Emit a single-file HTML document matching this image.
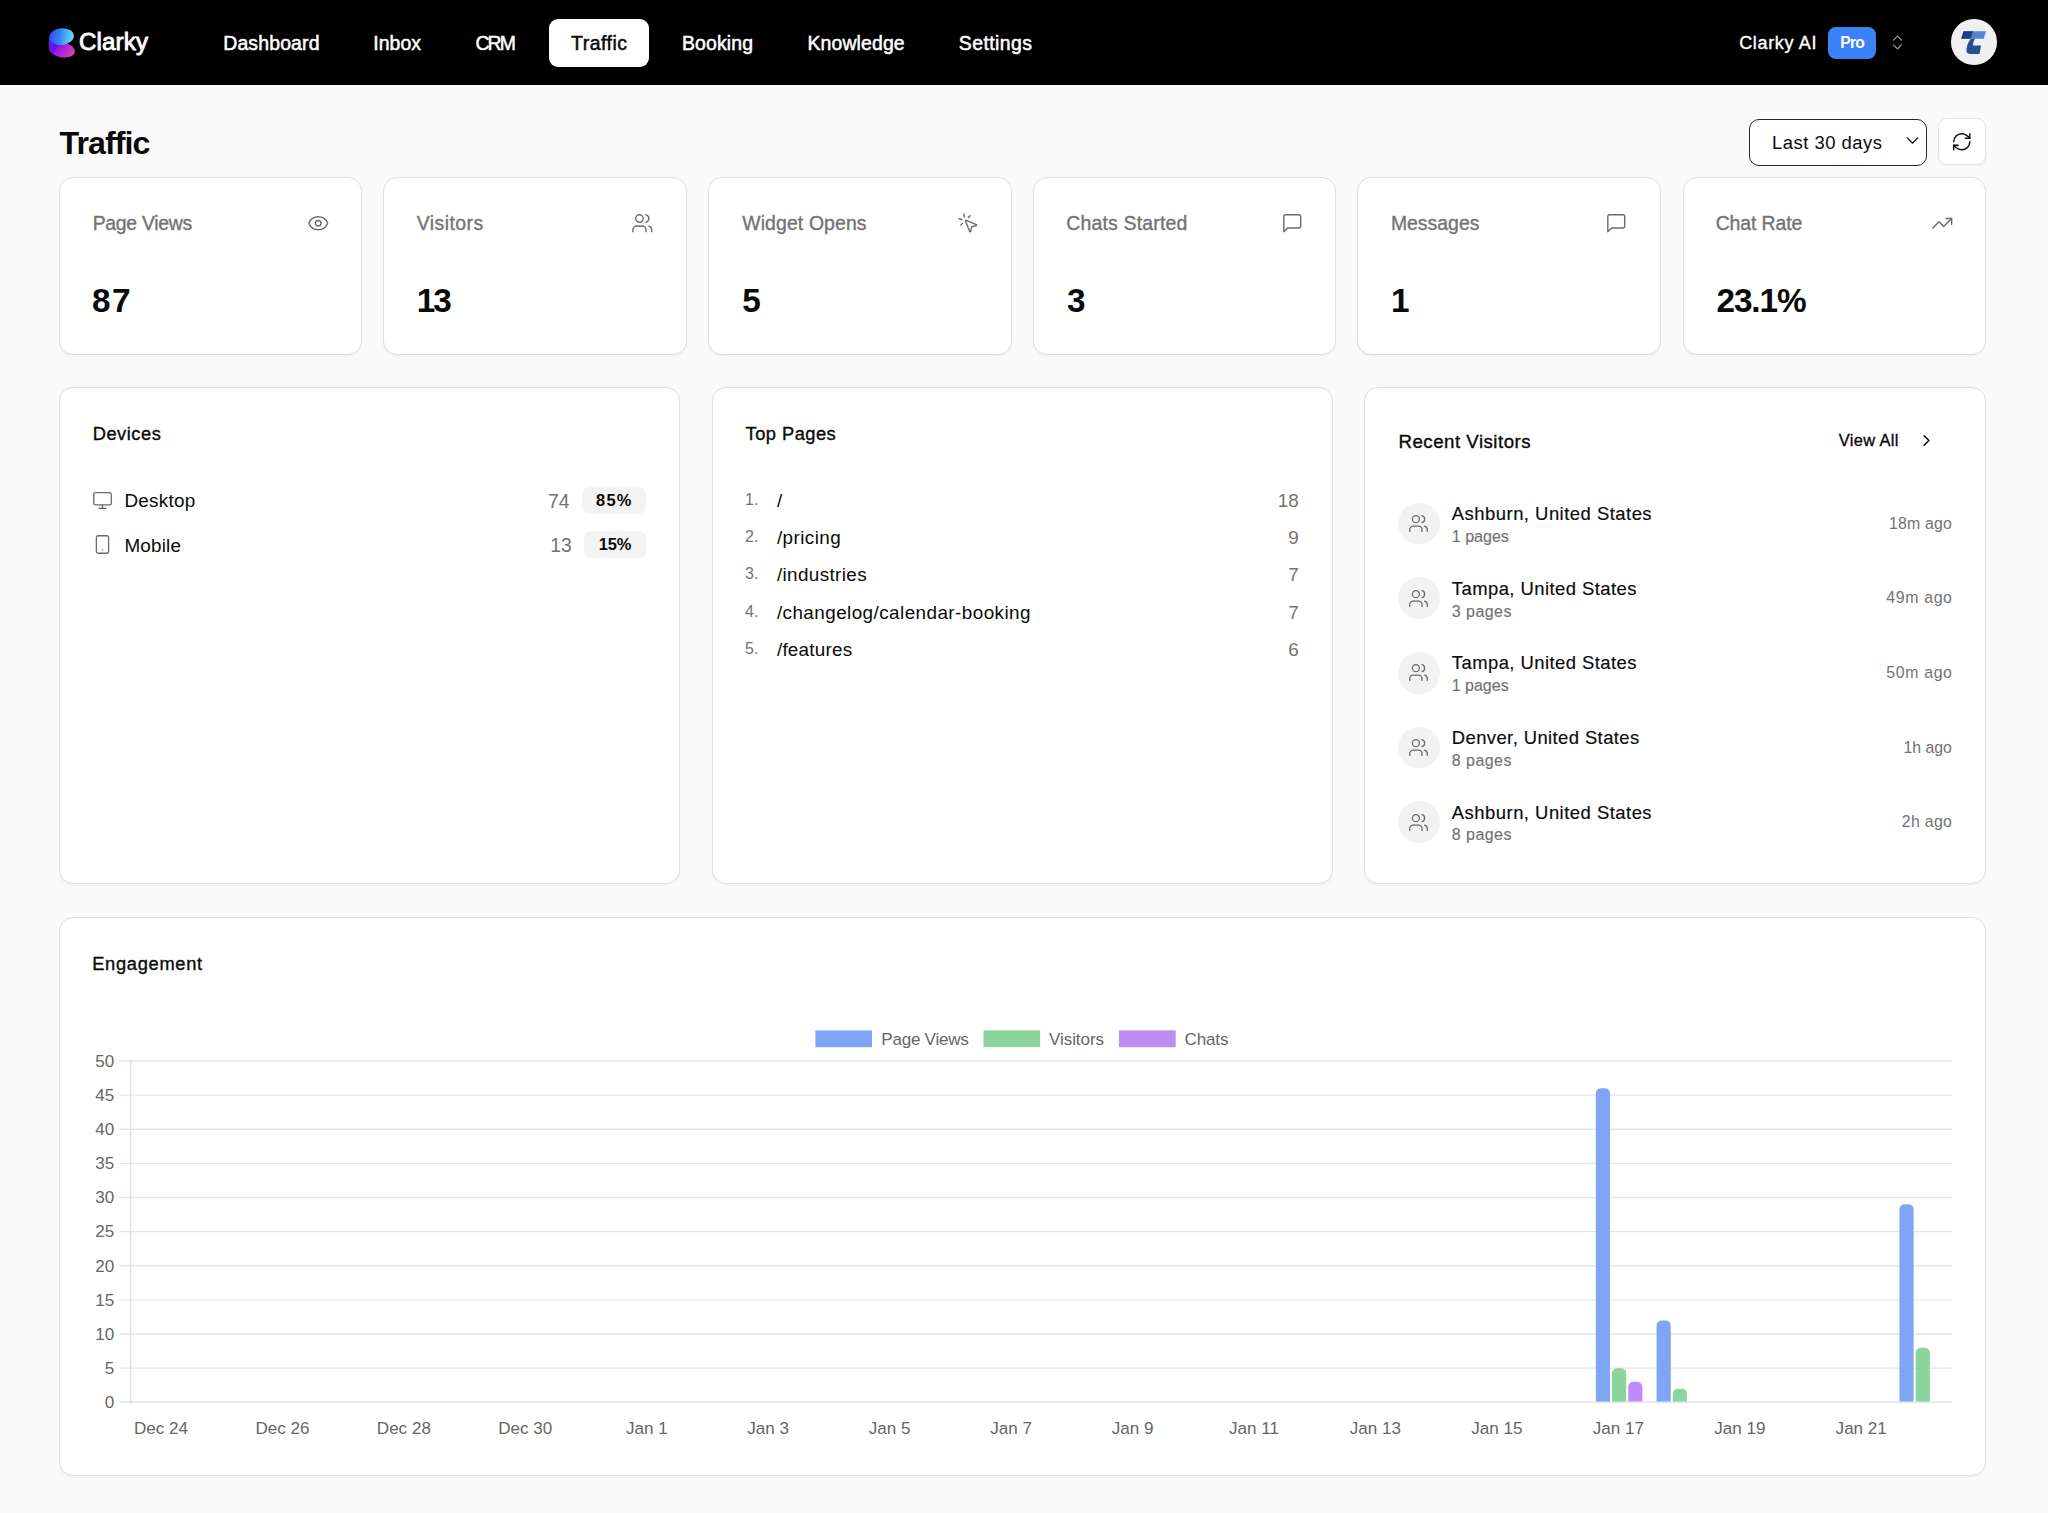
<!DOCTYPE html>
<html><head><meta charset="utf-8"><title>Traffic</title>
<style>
html,body{margin:0;padding:0;}
body{width:2048px;height:1513px;overflow:hidden;position:relative;background:#fafafa;font-family:"Liberation Sans",sans-serif;}
.t{position:absolute;white-space:nowrap;line-height:1;}
.bx{position:absolute;}
.ic{position:absolute;overflow:visible;}
</style></head><body>
<div class="bx" style="left:0.00px;top:0.00px;width:2048.00px;height:85.00px;background:#000;"></div>
<svg class="ic" style="left:44px;top:24px;width:36px;height:38px" viewBox="0 0 36 38">
<defs>
<linearGradient id="lg1" x1="0" y1="0" x2="1" y2="0.2"><stop offset="0" stop-color="#3a3cf2"/><stop offset="0.45" stop-color="#2f7cf6"/><stop offset="1" stop-color="#62d6fa"/></linearGradient>
<linearGradient id="lg2" x1="0" y1="0" x2="1" y2="0.3"><stop offset="0" stop-color="#6a12e6"/><stop offset="0.5" stop-color="#9a1de6"/><stop offset="1" stop-color="#d43fb4"/></linearGradient>
<filter id="bl" x="-20%" y="-20%" width="140%" height="140%"><feGaussianBlur stdDeviation="0.45"/></filter>
</defs>
<g filter="url(#bl)">
<ellipse cx="17.8" cy="25.6" rx="13.2" ry="7.6" transform="rotate(12 17.8 25.6)" fill="url(#lg2)"/>
<path d="M5.5 13 C3.8 19 4.3 25 8.5 29.5 L15 22 Z" fill="#6414e6"/>
<ellipse cx="17.6" cy="12.6" rx="12.3" ry="8.4" transform="rotate(-6 17.6 12.6)" fill="url(#lg1)"/>
</g></svg>
<div class="t" style="left:79.00px;top:30.00px;font-size:24.11px;color:#fff;letter-spacing:0.138px;-webkit-text-stroke:0.9px #fff;">Clarky</div>
<div class="bx" style="left:549.00px;top:19.00px;width:100.00px;height:47.60px;background:#fff;border-radius:9px;"></div>
<div class="t" style="left:223.20px;top:34.00px;font-size:19.43px;color:#fff;letter-spacing:0.163px;-webkit-text-stroke:0.5px #fff;">Dashboard</div>
<div class="t" style="left:373.30px;top:34.00px;font-size:19.43px;color:#fff;letter-spacing:0.038px;-webkit-text-stroke:0.5px #fff;">Inbox</div>
<div class="t" style="left:475.40px;top:34.00px;font-size:19.43px;color:#fff;letter-spacing:-1.833px;-webkit-text-stroke:0.5px #fff;">CRM</div>
<div class="t" style="left:571.00px;top:34.00px;font-size:19.43px;color:#0a0a0a;letter-spacing:0.513px;-webkit-text-stroke:0.5px #0a0a0a;">Traffic</div>
<div class="t" style="left:681.90px;top:34.00px;font-size:19.43px;color:#fff;letter-spacing:0.175px;-webkit-text-stroke:0.5px #fff;">Booking</div>
<div class="t" style="left:807.50px;top:34.00px;font-size:19.43px;color:#fff;letter-spacing:0.127px;-webkit-text-stroke:0.5px #fff;">Knowledge</div>
<div class="t" style="left:958.80px;top:34.00px;font-size:19.43px;color:#fff;letter-spacing:0.424px;-webkit-text-stroke:0.5px #fff;">Settings</div>
<div class="t" style="left:1739.20px;top:34.00px;font-size:18.01px;color:#fff;letter-spacing:0.665px;-webkit-text-stroke:0.35px #fff;">Clarky AI</div>
<div class="bx" style="left:1828.40px;top:26.90px;width:47.90px;height:31.80px;background:#3b82f6;border-radius:8px;"></div>
<div class="t" style="left:1840.30px;top:35.00px;font-size:15.60px;color:#fff;font-weight:700;letter-spacing:-0.708px;">Pro</div>
<svg class="ic" style="left:1888.00px;top:33.20px;width:19px;height:19px" viewBox="0 0 24 24" fill="none" stroke="#9a9a9a" stroke-width="1.6" stroke-linecap="round" stroke-linejoin="round"><path d="m7 15 5 5 5-5"/><path d="m7 9 5-5 5 5"/></svg>
<div class="bx" style="left:1951.2px;top:19.4px;width:45.4px;height:45.4px;border-radius:50%;background:#f0f0f0;"></div>
<svg class="ic" style="left:1958px;top:28px;width:32px;height:30px" viewBox="0 0 32 30">
<path d="M5.5 3.2 L28 3.2 L25.7 10.8 L3.2 10.8 Z" fill="#4f86cf"/>
<path d="M5.5 3.2 L15 3.2 L12.5 10.8 L3.2 10.8 Z" fill="#1e3f7d"/>
<path d="M13 10.8 L17 10.8 C15.5 13 15 15.5 15 17.5 L23 17.5 L21.5 26 L12.5 26 C9 26 8 23.5 8.6 20.5 C9.3 16.5 10.5 13 13 10.8Z" fill="#284f8f"/>
</svg>
<div class="t" style="left:59.50px;top:127.00px;font-size:32.20px;color:#0a0a0a;font-weight:700;letter-spacing:-0.957px;">Traffic</div>
<div class="bx" style="left:1749.00px;top:119.00px;width:178.00px;height:46.50px;background:#fff;border:1px solid #262626;border-radius:10px;box-sizing:border-box;"></div>
<div class="t" style="left:1772.00px;top:134.00px;font-size:18.44px;color:#0a0a0a;letter-spacing:0.496px;">Last 30 days</div>
<svg class="ic" style="left:1902.30px;top:129.50px;width:21px;height:21px" viewBox="0 0 24 24" fill="none" stroke="#0a0a0a" stroke-width="1.6" stroke-linecap="round" stroke-linejoin="round"><path d="m6 9 6 6 6-6"/></svg>
<div class="bx" style="left:1938.10px;top:118.10px;width:47.60px;height:47.40px;background:#fff;border:1px solid #e5e5e5;border-radius:9px;box-sizing:border-box;box-shadow:0 1px 2px rgba(0,0,0,0.05);"></div>
<svg class="ic" style="left:1951.25px;top:131.35px;width:21.5px;height:21.5px" viewBox="0 0 24 24" fill="none" stroke="#0a0a0a" stroke-width="1.6" stroke-linecap="round" stroke-linejoin="round"><path d="M3 12a9 9 0 0 1 9-9 9.75 9.75 0 0 1 6.74 2.74L21 8"/><path d="M21 3v5h-5"/><path d="M21 12a9 9 0 0 1-9 9 9.75 9.75 0 0 1-6.74-2.74L3 16"/><path d="M8 16H3v5"/></svg>
<div class="bx" style="left:59.00px;top:177.00px;width:303.00px;height:178.00px;background:#fff;border:1px solid #dedede;border-radius:14px;box-sizing:border-box;box-shadow:0 1.4px 2.5px rgba(0,0,0,0.035);"></div>
<div class="t" style="left:92.70px;top:214.00px;font-size:19.43px;color:#737373;letter-spacing:-0.300px;-webkit-text-stroke:0.35px #737373;">Page Views</div>
<div class="t" style="left:92.00px;top:284.00px;font-size:33.33px;color:#0a0a0a;font-weight:700;letter-spacing:1.522px;">87</div>
<svg class="ic" style="left:307.35px;top:211.75px;width:22.5px;height:22.5px" viewBox="0 0 24 24" fill="none" stroke="#6b6b6b" stroke-width="1.5" stroke-linecap="round" stroke-linejoin="round"><path d="M2.062 12.348a1 1 0 0 1 0-.696 10.75 10.75 0 0 1 19.876 0 1 1 0 0 1 0 .696 10.75 10.75 0 0 1-19.876 0"/><circle cx="12" cy="12" r="3"/></svg>
<div class="bx" style="left:383.00px;top:177.00px;width:304.00px;height:178.00px;background:#fff;border:1px solid #dedede;border-radius:14px;box-sizing:border-box;box-shadow:0 1.4px 2.5px rgba(0,0,0,0.035);"></div>
<div class="t" style="left:416.80px;top:214.00px;font-size:19.43px;color:#737373;letter-spacing:0.432px;-webkit-text-stroke:0.35px #737373;">Visitors</div>
<div class="t" style="left:416.80px;top:284.00px;font-size:33.33px;color:#0a0a0a;font-weight:700;letter-spacing:-2.178px;">13</div>
<svg class="ic" style="left:631.35px;top:211.75px;width:22.5px;height:22.5px" viewBox="0 0 24 24" fill="none" stroke="#6b6b6b" stroke-width="1.5" stroke-linecap="round" stroke-linejoin="round"><path d="M16 21v-2a4 4 0 0 0-4-4H6a4 4 0 0 0-4 4v2"/><circle cx="9" cy="7" r="4"/><path d="M22 21v-2a4 4 0 0 0-3-3.87"/><path d="M16 3.13a4 4 0 0 1 0 7.75"/></svg>
<div class="bx" style="left:708.00px;top:177.00px;width:304.00px;height:178.00px;background:#fff;border:1px solid #dedede;border-radius:14px;box-sizing:border-box;box-shadow:0 1.4px 2.5px rgba(0,0,0,0.035);"></div>
<div class="t" style="left:742.20px;top:214.00px;font-size:19.43px;color:#737373;letter-spacing:0.121px;-webkit-text-stroke:0.35px #737373;">Widget Opens</div>
<div class="t" style="left:742.20px;top:284.00px;font-size:33.33px;color:#0a0a0a;font-weight:700;">5</div>
<svg class="ic" style="left:957.05px;top:211.75px;width:22.5px;height:22.5px" viewBox="0 0 24 24" fill="none" stroke="#6b6b6b" stroke-width="1.5" stroke-linecap="round" stroke-linejoin="round"><path d="M14 4.1 12 6"/><path d="m5.1 8-2.9-.8"/><path d="m6 12-1.9 2"/><path d="M7.2 2.2 8 5.1"/><path d="M9.037 9.69a.498.498 0 0 1 .653-.653l11 4.5a.5.5 0 0 1-.074.949l-4.349 1.041a1 1 0 0 0-.74.739l-1.04 4.35a.5.5 0 0 1-.95.074z"/></svg>
<div class="bx" style="left:1033.00px;top:177.00px;width:303.00px;height:178.00px;background:#fff;border:1px solid #dedede;border-radius:14px;box-sizing:border-box;box-shadow:0 1.4px 2.5px rgba(0,0,0,0.035);"></div>
<div class="t" style="left:1066.20px;top:214.00px;font-size:19.43px;color:#737373;letter-spacing:0.196px;-webkit-text-stroke:0.35px #737373;">Chats Started</div>
<div class="t" style="left:1066.90px;top:284.00px;font-size:33.33px;color:#0a0a0a;font-weight:700;">3</div>
<svg class="ic" style="left:1281.35px;top:211.75px;width:22.5px;height:22.5px" viewBox="0 0 24 24" fill="none" stroke="#6b6b6b" stroke-width="1.5" stroke-linecap="round" stroke-linejoin="round"><path d="M21 15a2 2 0 0 1-2 2H7l-4 4V5a2 2 0 0 1 2-2h14a2 2 0 0 1 2 2z"/></svg>
<div class="bx" style="left:1357.00px;top:177.00px;width:304.00px;height:178.00px;background:#fff;border:1px solid #dedede;border-radius:14px;box-sizing:border-box;box-shadow:0 1.4px 2.5px rgba(0,0,0,0.035);"></div>
<div class="t" style="left:1390.90px;top:214.00px;font-size:19.43px;color:#737373;-webkit-text-stroke:0.35px #737373;">Messages</div>
<div class="t" style="left:1390.90px;top:284.00px;font-size:33.33px;color:#0a0a0a;font-weight:700;">1</div>
<svg class="ic" style="left:1605.35px;top:211.75px;width:22.5px;height:22.5px" viewBox="0 0 24 24" fill="none" stroke="#6b6b6b" stroke-width="1.5" stroke-linecap="round" stroke-linejoin="round"><path d="M21 15a2 2 0 0 1-2 2H7l-4 4V5a2 2 0 0 1 2-2h14a2 2 0 0 1 2 2z"/></svg>
<div class="bx" style="left:1683.00px;top:177.00px;width:303.00px;height:178.00px;background:#fff;border:1px solid #dedede;border-radius:14px;box-sizing:border-box;box-shadow:0 1.4px 2.5px rgba(0,0,0,0.035);"></div>
<div class="t" style="left:1715.70px;top:214.00px;font-size:19.43px;color:#737373;letter-spacing:-0.114px;-webkit-text-stroke:0.35px #737373;">Chat Rate</div>
<div class="t" style="left:1716.40px;top:284.00px;font-size:33.33px;color:#0a0a0a;font-weight:700;letter-spacing:-1.050px;">23.1%</div>
<svg class="ic" style="left:1931.35px;top:211.75px;width:22.5px;height:22.5px" viewBox="0 0 24 24" fill="none" stroke="#6b6b6b" stroke-width="1.5" stroke-linecap="round" stroke-linejoin="round"><polyline points="22 7 13.5 15.5 8.5 10.5 2 17"/><polyline points="16 7 22 7 22 13"/></svg>
<div class="bx" style="left:59.00px;top:387.00px;width:621.00px;height:497.00px;background:#fff;border:1px solid #dedede;border-radius:14px;box-sizing:border-box;box-shadow:0 1.4px 2.5px rgba(0,0,0,0.035);"></div>
<div class="bx" style="left:712.00px;top:387.00px;width:621.00px;height:497.00px;background:#fff;border:1px solid #dedede;border-radius:14px;box-sizing:border-box;box-shadow:0 1.4px 2.5px rgba(0,0,0,0.035);"></div>
<div class="bx" style="left:1364.00px;top:387.00px;width:622.00px;height:497.00px;background:#fff;border:1px solid #dedede;border-radius:14px;box-sizing:border-box;box-shadow:0 1.4px 2.5px rgba(0,0,0,0.035);"></div>
<div class="t" style="left:92.70px;top:425.00px;font-size:18.30px;color:#0a0a0a;letter-spacing:0.520px;-webkit-text-stroke:0.35px #0a0a0a;">Devices</div>
<svg class="ic" style="left:91.70px;top:490.00px;width:21px;height:21px" viewBox="0 0 24 24" fill="none" stroke="#6b6b6b" stroke-width="1.5" stroke-linecap="round" stroke-linejoin="round"><rect width="20" height="14" x="2" y="3" rx="2"/><line x1="8" x2="16" y1="21" y2="21"/><line x1="12" x2="12" y1="17" y2="21"/></svg>
<div class="t" style="left:124.40px;top:492.00px;font-size:18.87px;color:#0a0a0a;letter-spacing:0.285px;">Desktop</div>
<div class="t" style="left:548.03px;top:492.00px;font-size:19.30px;color:#737373;">74</div>
<div class="bx" style="left:582.00px;top:487.00px;width:64.20px;height:27.40px;background:#f3f3f3;border-radius:7px;"></div>
<div class="t" style="left:596.00px;top:492.00px;font-size:16.45px;color:#0a0a0a;font-weight:700;letter-spacing:1.281px;">85%</div>
<svg class="ic" style="left:91.50px;top:534.30px;width:21px;height:21px" viewBox="0 0 24 24" fill="none" stroke="#6b6b6b" stroke-width="1.5" stroke-linecap="round" stroke-linejoin="round"><rect width="14" height="20" x="5" y="2" rx="2" ry="2"/><path d="M12 18h.01"/></svg>
<div class="t" style="left:124.40px;top:537.00px;font-size:18.87px;color:#0a0a0a;letter-spacing:0.207px;">Mobile</div>
<div class="t" style="left:550.33px;top:536.00px;font-size:19.30px;color:#737373;">13</div>
<div class="bx" style="left:584.00px;top:530.80px;width:62.20px;height:27.40px;background:#f3f3f3;border-radius:7px;"></div>
<div class="t" style="left:598.70px;top:536.00px;font-size:16.45px;color:#0a0a0a;font-weight:700;letter-spacing:-0.069px;">15%</div>
<div class="t" style="left:745.60px;top:425.00px;font-size:18.30px;color:#0a0a0a;letter-spacing:0.466px;-webkit-text-stroke:0.35px #0a0a0a;">Top Pages</div>
<div class="t" style="left:745.10px;top:491.00px;font-size:16.03px;color:#737373;">1.</div>
<div class="t" style="left:776.90px;top:492.00px;font-size:18.87px;color:#0a0a0a;">/</div>
<div class="t" style="left:1277.82px;top:492.00px;font-size:18.87px;color:#737373;">18</div>
<div class="t" style="left:745.10px;top:528.00px;font-size:16.03px;color:#737373;">2.</div>
<div class="t" style="left:776.90px;top:529.00px;font-size:18.87px;color:#0a0a0a;letter-spacing:0.443px;">/pricing</div>
<div class="t" style="left:1288.32px;top:529.00px;font-size:18.87px;color:#737373;">9</div>
<div class="t" style="left:745.10px;top:565.00px;font-size:16.03px;color:#737373;">3.</div>
<div class="t" style="left:776.90px;top:566.00px;font-size:18.87px;color:#0a0a0a;letter-spacing:0.375px;">/industries</div>
<div class="t" style="left:1288.32px;top:566.00px;font-size:18.87px;color:#737373;">7</div>
<div class="t" style="left:745.10px;top:603.00px;font-size:16.03px;color:#737373;">4.</div>
<div class="t" style="left:776.90px;top:604.00px;font-size:18.87px;color:#0a0a0a;letter-spacing:0.438px;">/changelog/calendar-booking</div>
<div class="t" style="left:1288.32px;top:604.00px;font-size:18.87px;color:#737373;">7</div>
<div class="t" style="left:745.10px;top:640.00px;font-size:16.03px;color:#737373;">5.</div>
<div class="t" style="left:776.90px;top:641.00px;font-size:18.87px;color:#0a0a0a;letter-spacing:0.251px;">/features</div>
<div class="t" style="left:1288.32px;top:641.00px;font-size:18.87px;color:#737373;">6</div>
<div class="t" style="left:1398.50px;top:433.00px;font-size:18.72px;color:#0a0a0a;letter-spacing:0.476px;-webkit-text-stroke:0.35px #0a0a0a;">Recent Visitors</div>
<div class="t" style="left:1838.70px;top:432.00px;font-size:16.45px;color:#0a0a0a;letter-spacing:0.341px;-webkit-text-stroke:0.35px #0a0a0a;">View All</div>
<svg class="ic" style="left:1917.00px;top:431.00px;width:19px;height:19px" viewBox="0 0 24 24" fill="none" stroke="#0a0a0a" stroke-width="1.9" stroke-linecap="round" stroke-linejoin="round"><path d="m9 18 6-6-6-6"/></svg>
<div class="bx" style="left:1398px;top:502.70px;width:41.8px;height:41.8px;border-radius:50%;background:#f2f2f2;"></div>
<svg class="ic" style="left:1408.20px;top:513.10px;width:21px;height:21px" viewBox="0 0 24 24" fill="none" stroke="#6b6b6b" stroke-width="1.5" stroke-linecap="round" stroke-linejoin="round"><path d="M16 21v-2a4 4 0 0 0-4-4H6a4 4 0 0 0-4 4v2"/><circle cx="9" cy="7" r="4"/><path d="M22 21v-2a4 4 0 0 0-3-3.87"/><path d="M16 3.13a4 4 0 0 1 0 7.75"/></svg>
<div class="t" style="left:1451.80px;top:505.00px;font-size:18.44px;color:#0a0a0a;letter-spacing:0.485px;-webkit-text-stroke:0.15px #0a0a0a;">Ashburn, United States</div>
<div class="t" style="left:1451.80px;top:528.00px;font-size:16.03px;color:#737373;-webkit-text-stroke:0.15px #737373;">1 pages</div>
<div class="t" style="left:1888.90px;top:516.00px;font-size:15.89px;color:#737373;letter-spacing:0.209px;">18m ago</div>
<div class="bx" style="left:1398px;top:577.35px;width:41.8px;height:41.8px;border-radius:50%;background:#f2f2f2;"></div>
<svg class="ic" style="left:1408.20px;top:587.75px;width:21px;height:21px" viewBox="0 0 24 24" fill="none" stroke="#6b6b6b" stroke-width="1.5" stroke-linecap="round" stroke-linejoin="round"><path d="M16 21v-2a4 4 0 0 0-4-4H6a4 4 0 0 0-4 4v2"/><circle cx="9" cy="7" r="4"/><path d="M22 21v-2a4 4 0 0 0-3-3.87"/><path d="M16 3.13a4 4 0 0 1 0 7.75"/></svg>
<div class="t" style="left:1451.80px;top:580.00px;font-size:18.44px;color:#0a0a0a;letter-spacing:0.438px;-webkit-text-stroke:0.15px #0a0a0a;">Tampa, United States</div>
<div class="t" style="left:1451.80px;top:603.00px;font-size:16.03px;color:#737373;letter-spacing:0.442px;-webkit-text-stroke:0.15px #737373;">3 pages</div>
<div class="t" style="left:1886.30px;top:590.00px;font-size:15.89px;color:#737373;letter-spacing:0.643px;">49m ago</div>
<div class="bx" style="left:1398px;top:652.00px;width:41.8px;height:41.8px;border-radius:50%;background:#f2f2f2;"></div>
<svg class="ic" style="left:1408.20px;top:662.40px;width:21px;height:21px" viewBox="0 0 24 24" fill="none" stroke="#6b6b6b" stroke-width="1.5" stroke-linecap="round" stroke-linejoin="round"><path d="M16 21v-2a4 4 0 0 0-4-4H6a4 4 0 0 0-4 4v2"/><circle cx="9" cy="7" r="4"/><path d="M22 21v-2a4 4 0 0 0-3-3.87"/><path d="M16 3.13a4 4 0 0 1 0 7.75"/></svg>
<div class="t" style="left:1451.80px;top:654.00px;font-size:18.44px;color:#0a0a0a;letter-spacing:0.438px;-webkit-text-stroke:0.15px #0a0a0a;">Tampa, United States</div>
<div class="t" style="left:1451.80px;top:677.00px;font-size:16.03px;color:#737373;letter-spacing:-0.024px;-webkit-text-stroke:0.15px #737373;">1 pages</div>
<div class="t" style="left:1886.30px;top:665.00px;font-size:15.89px;color:#737373;letter-spacing:0.643px;">50m ago</div>
<div class="bx" style="left:1398px;top:726.65px;width:41.8px;height:41.8px;border-radius:50%;background:#f2f2f2;"></div>
<svg class="ic" style="left:1408.20px;top:737.05px;width:21px;height:21px" viewBox="0 0 24 24" fill="none" stroke="#6b6b6b" stroke-width="1.5" stroke-linecap="round" stroke-linejoin="round"><path d="M16 21v-2a4 4 0 0 0-4-4H6a4 4 0 0 0-4 4v2"/><circle cx="9" cy="7" r="4"/><path d="M22 21v-2a4 4 0 0 0-3-3.87"/><path d="M16 3.13a4 4 0 0 1 0 7.75"/></svg>
<div class="t" style="left:1451.80px;top:729.00px;font-size:18.44px;color:#0a0a0a;letter-spacing:0.402px;-webkit-text-stroke:0.15px #0a0a0a;">Denver, United States</div>
<div class="t" style="left:1451.80px;top:752.00px;font-size:16.03px;color:#737373;letter-spacing:0.442px;-webkit-text-stroke:0.15px #737373;">8 pages</div>
<div class="t" style="left:1903.50px;top:740.00px;font-size:15.89px;color:#737373;letter-spacing:-0.022px;">1h ago</div>
<div class="bx" style="left:1398px;top:801.30px;width:41.8px;height:41.8px;border-radius:50%;background:#f2f2f2;"></div>
<svg class="ic" style="left:1408.20px;top:811.70px;width:21px;height:21px" viewBox="0 0 24 24" fill="none" stroke="#6b6b6b" stroke-width="1.5" stroke-linecap="round" stroke-linejoin="round"><path d="M16 21v-2a4 4 0 0 0-4-4H6a4 4 0 0 0-4 4v2"/><circle cx="9" cy="7" r="4"/><path d="M22 21v-2a4 4 0 0 0-3-3.87"/><path d="M16 3.13a4 4 0 0 1 0 7.75"/></svg>
<div class="t" style="left:1451.80px;top:804.00px;font-size:18.44px;color:#0a0a0a;letter-spacing:0.485px;-webkit-text-stroke:0.15px #0a0a0a;">Ashburn, United States</div>
<div class="t" style="left:1451.80px;top:826.00px;font-size:16.03px;color:#737373;letter-spacing:0.442px;-webkit-text-stroke:0.15px #737373;">8 pages</div>
<div class="t" style="left:1901.80px;top:814.00px;font-size:15.89px;color:#737373;letter-spacing:0.318px;">2h ago</div>
<div class="bx" style="left:59.00px;top:917.00px;width:1927.00px;height:559.00px;background:#fff;border:1px solid #dedede;border-radius:14px;box-sizing:border-box;box-shadow:0 1.4px 2.5px rgba(0,0,0,0.035);"></div>
<div class="t" style="left:92.20px;top:955.00px;font-size:18.30px;color:#0a0a0a;letter-spacing:0.704px;-webkit-text-stroke:0.35px #0a0a0a;">Engagement</div>
<svg class="ic" style="left:0;top:0;width:2048px;height:1513px" viewBox="0 0 2048 1513"><line x1="119.3" x2="1952.3" y1="1402.30" y2="1402.30" stroke="#e5e5e5" stroke-width="1.4"/><line x1="119.3" x2="1952.3" y1="1368.17" y2="1368.17" stroke="#e5e5e5" stroke-width="1.4"/><line x1="119.3" x2="1952.3" y1="1334.04" y2="1334.04" stroke="#e5e5e5" stroke-width="1.4"/><line x1="119.3" x2="1952.3" y1="1299.91" y2="1299.91" stroke="#e5e5e5" stroke-width="1.4"/><line x1="119.3" x2="1952.3" y1="1265.78" y2="1265.78" stroke="#e5e5e5" stroke-width="1.4"/><line x1="119.3" x2="1952.3" y1="1231.65" y2="1231.65" stroke="#e5e5e5" stroke-width="1.4"/><line x1="119.3" x2="1952.3" y1="1197.52" y2="1197.52" stroke="#e5e5e5" stroke-width="1.4"/><line x1="119.3" x2="1952.3" y1="1163.39" y2="1163.39" stroke="#e5e5e5" stroke-width="1.4"/><line x1="119.3" x2="1952.3" y1="1129.26" y2="1129.26" stroke="#e5e5e5" stroke-width="1.4"/><line x1="119.3" x2="1952.3" y1="1095.13" y2="1095.13" stroke="#e5e5e5" stroke-width="1.4"/><line x1="119.3" x2="1952.3" y1="1061.00" y2="1061.00" stroke="#e5e5e5" stroke-width="1.4"/><line x1="130.6" x2="130.6" y1="1061.00" y2="1402.30" stroke="#e0e0e0" stroke-width="1.4"/><path d="M1595.84 1401.40 V1093.80 Q1595.84 1088.30 1601.34 1088.30 H1604.51 Q1610.01 1088.30 1610.01 1093.80 V1401.40 Z" fill="#7ea6f4"/><path d="M1612.04 1401.40 V1373.67 Q1612.04 1368.17 1617.54 1368.17 H1620.71 Q1626.21 1368.17 1626.21 1373.67 V1401.40 Z" fill="#8bd49b"/><path d="M1628.23 1401.40 V1387.32 Q1628.23 1381.82 1633.73 1381.82 H1636.90 Q1642.40 1381.82 1642.40 1387.32 V1401.40 Z" fill="#bd8cf5"/><path d="M1656.57 1401.40 V1325.89 Q1656.57 1320.39 1662.07 1320.39 H1665.24 Q1670.74 1320.39 1670.74 1325.89 V1401.40 Z" fill="#7ea6f4"/><path d="M1672.76 1401.40 V1394.15 Q1672.76 1388.65 1678.26 1388.65 H1681.43 Q1686.93 1388.65 1686.93 1394.15 V1401.40 Z" fill="#8bd49b"/><path d="M1899.46 1401.40 V1209.85 Q1899.46 1204.35 1904.96 1204.35 H1908.13 Q1913.63 1204.35 1913.63 1209.85 V1401.40 Z" fill="#7ea6f4"/><path d="M1915.65 1401.40 V1353.19 Q1915.65 1347.69 1921.15 1347.69 H1924.32 Q1929.82 1347.69 1929.82 1353.19 V1401.40 Z" fill="#8bd49b"/><rect x="815.4" y="1030.4" width="56.60" height="16.8" fill="#7ea6f4"/><rect x="983.5" y="1030.4" width="56.70" height="16.8" fill="#8bd49b"/><rect x="1119" y="1030.4" width="56.70" height="16.8" fill="#bd8cf5"/></svg>
<div class="t" style="left:104.72px;top:1394.00px;font-size:17.07px;color:#666;">0</div>
<div class="t" style="left:104.72px;top:1360.00px;font-size:17.07px;color:#666;">5</div>
<div class="t" style="left:95.22px;top:1326.00px;font-size:17.07px;color:#666;">10</div>
<div class="t" style="left:95.22px;top:1292.00px;font-size:17.07px;color:#666;">15</div>
<div class="t" style="left:95.22px;top:1258.00px;font-size:17.07px;color:#666;">20</div>
<div class="t" style="left:95.22px;top:1223.00px;font-size:17.07px;color:#666;">25</div>
<div class="t" style="left:95.22px;top:1189.00px;font-size:17.07px;color:#666;">30</div>
<div class="t" style="left:95.22px;top:1155.00px;font-size:17.07px;color:#666;">35</div>
<div class="t" style="left:95.22px;top:1121.00px;font-size:17.07px;color:#666;">40</div>
<div class="t" style="left:95.22px;top:1087.00px;font-size:17.07px;color:#666;">45</div>
<div class="t" style="left:95.22px;top:1053.00px;font-size:17.07px;color:#666;">50</div>
<div class="t" style="left:133.93px;top:1420.00px;font-size:17.07px;color:#666;">Dec 24</div>
<div class="t" style="left:255.38px;top:1420.00px;font-size:17.07px;color:#666;">Dec 26</div>
<div class="t" style="left:376.82px;top:1420.00px;font-size:17.07px;color:#666;">Dec 28</div>
<div class="t" style="left:498.27px;top:1420.00px;font-size:17.07px;color:#666;">Dec 30</div>
<div class="t" style="left:625.88px;top:1420.00px;font-size:17.07px;color:#666;">Jan 1</div>
<div class="t" style="left:747.33px;top:1420.00px;font-size:17.07px;color:#666;">Jan 3</div>
<div class="t" style="left:868.77px;top:1420.00px;font-size:17.07px;color:#666;">Jan 5</div>
<div class="t" style="left:990.22px;top:1420.00px;font-size:17.07px;color:#666;">Jan 7</div>
<div class="t" style="left:1111.67px;top:1420.00px;font-size:17.07px;color:#666;">Jan 9</div>
<div class="t" style="left:1229.00px;top:1420.00px;font-size:17.07px;color:#666;">Jan 11</div>
<div class="t" style="left:1349.81px;top:1420.00px;font-size:17.07px;color:#666;">Jan 13</div>
<div class="t" style="left:1471.26px;top:1420.00px;font-size:17.07px;color:#666;">Jan 15</div>
<div class="t" style="left:1592.70px;top:1420.00px;font-size:17.07px;color:#666;">Jan 17</div>
<div class="t" style="left:1714.15px;top:1420.00px;font-size:17.07px;color:#666;">Jan 19</div>
<div class="t" style="left:1835.60px;top:1420.00px;font-size:17.07px;color:#666;">Jan 21</div>
<div class="t" style="left:881.30px;top:1031.00px;font-size:17.07px;color:#666;letter-spacing:-0.255px;">Page Views</div>
<div class="t" style="left:1049.00px;top:1031.00px;font-size:17.07px;color:#666;letter-spacing:-0.089px;">Visitors</div>
<div class="t" style="left:1184.50px;top:1031.00px;font-size:17.07px;color:#666;letter-spacing:-0.145px;">Chats</div>
</body></html>
